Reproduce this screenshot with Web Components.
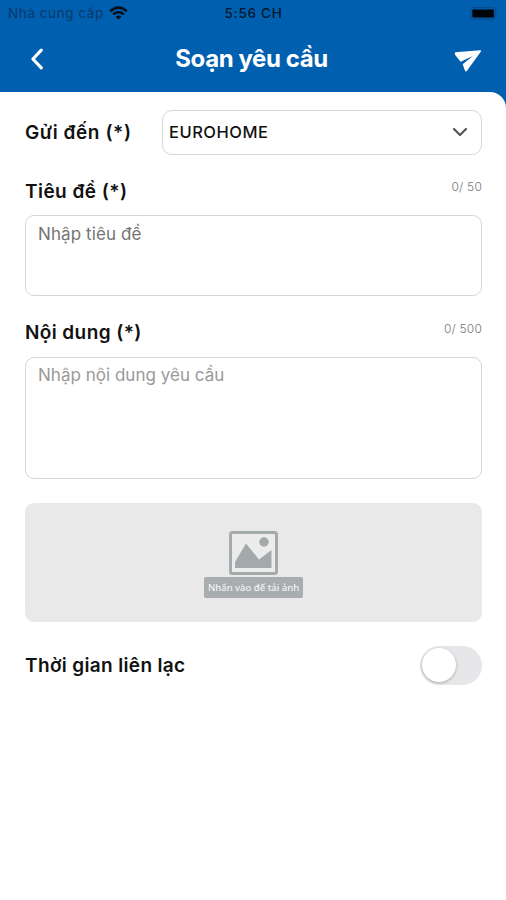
<!DOCTYPE html>
<html lang="vi">
<head>
<meta charset="utf-8">
<title>Soạn yêu cầu</title>
<style>
html,body{margin:0;height:100%}
body{font-family:Inter,"Liberation Sans",sans-serif;background:#fff;color:#111}
</style>
</head>
<body>
<request-screen></request-screen>
<script>
function define(name, html) {
  const t = document.createElement('template');
  t.innerHTML = html;
  customElements.define(name, class extends HTMLElement {
    constructor() {
      super();
      this.attachShadow({mode: 'open'}).append(t.content.cloneNode(true));
    }
  });
}

define('status-bar', `
<style>
:host{display:grid;grid-template-columns:1fr auto 1fr;align-items:center;height:26px;padding:0 7px 0 8px;box-sizing:border-box;color:#06172c;font-size:13px;line-height:26px}
.left{display:flex;align-items:center;gap:5px}
.carrier{color:#0a3768;font-size:13.5px;letter-spacing:.57px}
.time{font-weight:500;font-size:13.5px;letter-spacing:.75px}
.battery{justify-self:end}
svg{display:block}
</style>
<div class="left"><span class="carrier">Nhà cung cấp</span>
<svg width="19" height="14" viewBox="0 0 19 14" fill="none" stroke="#031120" stroke-width="2.5"><path d="M1.2 5.2Q9.5-2 17.8 5.2M4.2 8.4Q9.5 3.8 14.8 8.4"/><path d="M9.5 13.6 6.6 10.7Q9.5 8.4 12.4 10.7Z" fill="#031120" stroke="none"/></svg></div>
<span class="time">5:56 CH</span>
<svg class="battery" width="29" height="13" viewBox="0 0 29 13"><rect x=".7" y=".7" width="24.6" height="11.6" rx="3" fill="none" stroke="#084c8b" stroke-width="1.2"/><rect x="2.3" y="2.5" width="21.6" height="8" rx="1" fill="#000509"/><path d="M26.5 4.3q2 2.2 0 4.4z" fill="#084c8b"/></svg>
`);

define('nav-bar', `
<style>
:host{display:grid;grid-template-columns:54px 1fr 54px;align-items:center;height:66px;padding:0 11px 0 10px;box-sizing:border-box;color:#fff}
h1{margin:0 2px 0 0;text-align:center;font-size:24px;line-height:30px;font-weight:700;letter-spacing:-.42px}
svg{display:block;justify-self:center}
.send{margin-top:3px}
</style>
<svg width="16" height="24" viewBox="0 0 16 24" fill="none" stroke="#fff" stroke-width="3.2" stroke-linecap="round" stroke-linejoin="round"><path d="M12.3 3.2 3.9 12l8.4 8.8"/></svg>
<h1><slot></slot></h1>
<svg class="send" width="28" height="24" viewBox="0 0 28 24"><path d="M1.4 3.2 26.2 1.2Q27.8 1.2 26.9 2.4L13 21.8Q11.7 23.2 10.9 21.5L8.7 15.3 18.8 6.9 6.6 12.7 1.6 6.6Q0 4 1.4 3.2Z" fill="#fff"/></svg>
`);

define('page-sheet', `
<style>
:host{display:block;flex:1;background:#fff;border-top-right-radius:16px;padding:18px 24px 0 25px;box-sizing:border-box}
</style><slot></slot>`);

define('field-label', `
<style>:host{display:block;font-size:19px;line-height:24px;font-weight:600;white-space:nowrap;letter-spacing:var(--track,.35px)}</style><slot></slot>`);

define('select-field', `
<style>
:host{display:grid;grid-template-columns:137px 1fr;align-items:center;height:45px}
.box{display:flex;align-items:center;justify-content:space-between;height:45px;box-sizing:border-box;border:1.5px solid #d6d6d6;border-radius:10px;padding:0 13px 1px 6px;font-size:16.5px;font-weight:500;letter-spacing:.5px}
</style>
<slot name="label"></slot>
<div class="box"><slot></slot><svg width="16" height="10" viewBox="0 0 16 10" fill="none" stroke="#555" stroke-width="2.2" stroke-linecap="round" stroke-linejoin="round"><path d="M2 2l6 6 6-6"/></svg></div>
`);

define('text-field', `
<style>
:host{display:block}
.head{display:flex;justify-content:space-between;align-items:flex-start;height:36px}
.head slot[name=label]{display:block;padding-top:var(--label-drop,0px)}
.count{font-size:12px;line-height:16px;color:#777;font-weight:300;letter-spacing:.2px}
.box{height:var(--height);box-sizing:border-box;border:1.5px solid #d6d6d6;border-radius:9px;padding:var(--hint-top) 12px;font-size:17px;line-height:22px;color:var(--hint);letter-spacing:var(--hint-track)}
</style>
<div class="head"><slot name="label"></slot><span class="count"><slot name="count"></slot></span></div>
<div class="box"><slot></slot></div>
`);

define('image-upload', `
<style>
:host{display:flex;flex-direction:column;align-items:center;height:119px;background:#e9e9e9;border-radius:9px;box-sizing:border-box;padding-top:28px}
svg{display:block;margin-bottom:2px}
.caption{width:99px;height:21px;box-sizing:border-box;border-radius:2px;background:#a8adaf;color:#f2f3f3;font:500 9.5px/21px "Noto Sans",sans-serif;text-align:center;white-space:nowrap}
</style>
<svg width="50" height="44" viewBox="0 0 50 44"><rect x="1.5" y="1.5" width="46" height="41" rx="2" fill="#ececec" stroke="#a4a9ac" stroke-width="3"/><path d="M6 37V31L17 12.5 30 28.5 42.5 19V37Z" fill="#a4a9ac"/><circle cx="35" cy="11" r="4.7" fill="#a4a9ac"/></svg>
<span class="caption"><slot></slot></span>
`);

define('toggle-row', `
<style>
:host{display:flex;align-items:center;justify-content:space-between;height:39px}
.track{display:flex;width:62px;height:39px;border-radius:20px;box-sizing:border-box;background:#e7e7ea;padding:2px}
.knob{width:34px;height:34px;border-radius:50%;background:#fff;box-shadow:0 1px 3px #0004}
</style><slot></slot><div class="track"><div class="knob"></div></div>
`);

define('request-screen', `
<style>
:host{display:flex;flex-direction:column;height:900px;background:#0060af;overflow:hidden}
select-field{margin-bottom:24px;--track:.58px}
.title{--height:81px;--hint:#747474;--hint-track:.1px;--hint-top:7px;--label-drop:1px;--track:.45px;margin-bottom:25px}
.body{--height:122px;--hint:#999;--hint-track:.02px;--hint-top:6px;--track:.4px;margin-bottom:24px}
image-upload{margin-bottom:24px}
</style>
<status-bar></status-bar>
<nav-bar>Soạn yêu cầu</nav-bar>
<page-sheet>
<select-field><field-label slot="label">Gửi đến (*)</field-label>EUROHOME</select-field>
<text-field class="title"><field-label slot="label">Tiêu đề (*)</field-label><span slot="count">0/ 50</span>Nhập tiêu đề</text-field>
<text-field class="body"><field-label slot="label">Nội dung (*)</field-label><span slot="count">0/ 500</span>Nhập nội dung yêu cầu</text-field>
<image-upload>Nhấn vào để tải ảnh</image-upload>
<toggle-row><field-label>Thời gian liên lạc</field-label></toggle-row>
</page-sheet>
`);
</script>
</body>
</html>
